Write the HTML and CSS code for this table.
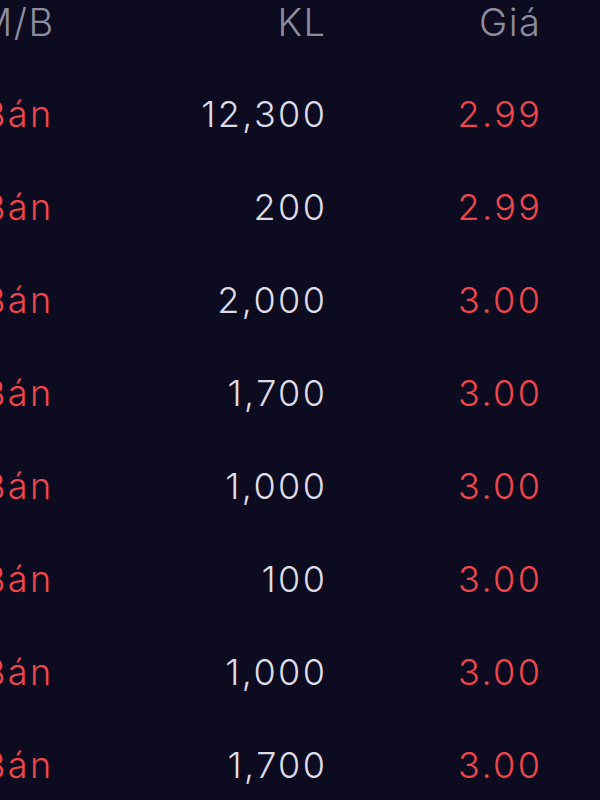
FILE: index.html
```html
<!DOCTYPE html>
<html lang="vi">
<head>
<meta charset="utf-8">
<link rel="stylesheet" href="styles.css">
</head>
<body>
<div class="table">
  <div class="head">
    <span class="c-mb">M/B</span>
    <span class="c-kl">KL</span>
    <span class="c-gia">Giá</span>
  </div>
  <div class="rows">
    <div class="row"><span class="c-mb sell">Bán</span><span class="c-kl vol">12,300</span><span class="c-gia sell">2.99</span></div>
    <div class="row"><span class="c-mb sell">Bán</span><span class="c-kl vol">200</span><span class="c-gia sell">2.99</span></div>
    <div class="row"><span class="c-mb sell">Bán</span><span class="c-kl vol">2,000</span><span class="c-gia sell">3.00</span></div>
    <div class="row"><span class="c-mb sell">Bán</span><span class="c-kl vol">1,700</span><span class="c-gia sell">3.00</span></div>
    <div class="row"><span class="c-mb sell">Bán</span><span class="c-kl vol">1,000</span><span class="c-gia sell">3.00</span></div>
    <div class="row"><span class="c-mb sell">Bán</span><span class="c-kl vol">100</span><span class="c-gia sell">3.00</span></div>
    <div class="row"><span class="c-mb sell">Bán</span><span class="c-kl vol">1,000</span><span class="c-gia sell">3.00</span></div>
    <div class="row"><span class="c-mb sell">Bán</span><span class="c-kl vol">1,700</span><span class="c-gia sell">3.00</span></div>
  </div>
</div>
</body>
</html>
```

FILE: styles.css
```css
html, body {
  margin: 0;
  padding: 0;
  background: #0c0b20;
  overflow: hidden;
}
body {
  width: 600px;
  height: 800px;
  font-family: Inter, "Noto Sans", sans-serif;
}
.head, .row {
  display: grid;
  grid-template-columns: 100px 225px 215px;
  white-space: nowrap;
}
.head {
  font-size: 38px;
  line-height: 44px;
  height: 44px;
  color: #8e8d9d;
  letter-spacing: 1.5px;
  font-weight: 350;
}
.rows {
  padding-top: 23.5px;
}
.row {
  font-size: 36px;
  line-height: 93px;
  height: 93px;
  letter-spacing: 2.4px;
  font-weight: 350;
}
.c-mb {
  text-align: left;
  margin-left: -18px;
}
.head .c-mb { margin-left: -22px; }
.c-kl, .c-gia {
  text-align: right;
}
.row .c-kl, .row .c-gia { margin-right: -2.4px; }
.head .c-kl, .head .c-gia { margin-right: -1.5px; }
.sell { color: #f0464b; }
.vol { color: #dddce6; }
```
